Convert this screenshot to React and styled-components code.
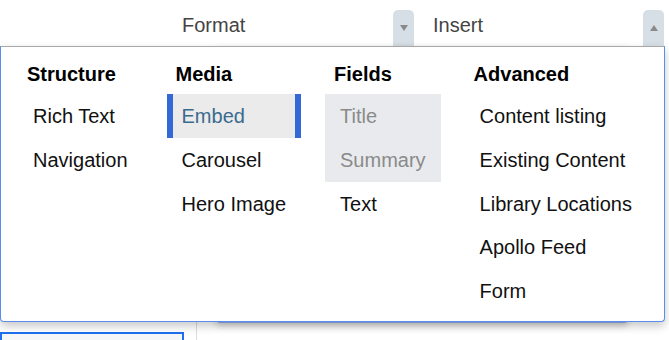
import React from 'react'
import styled, { createGlobalStyle } from 'styled-components'

const Global = createGlobalStyle`
  body {
    margin: 0;
    background: #fff;
    font-family: "Liberation Sans", Arial, sans-serif;
  }
`

const Page = styled.div`
  position: relative;
  width: 669px;
  height: 340px;
  overflow: hidden;
`

const Toolbar = styled.div`
  display: flex;
  gap: 4px;
  height: 46px;
  padding-left: 167px;
`

const Menu = styled.div`
  display: flex;
  align-items: center;
  justify-content: space-between;
  width: ${p => p.$width}px;
`

const MenuLabel = styled.span`
  padding: 4px 0 0 15px;
  font-size: 20px;
  color: #444;
`

const ArrowButton = styled.div`
  display: flex;
  align-items: center;
  justify-content: center;
  align-self: flex-end;
  width: 21px;
  height: 36px;
  background: #d6dfe6;
  border-radius: 5px 5px 0 0;
`

const Workspace = styled.div`
  display: flex;
  height: 294px;
`

const Sidebar = styled.div`
  width: 196px;
  border-right: 1px solid #dcdcdc;
  padding-top: 286px;
`

const SideBox = styled.div`
  width: 184px;
  height: 40px;
  box-sizing: border-box;
  border: 2px solid #1d6ff0;
  background: #f5f6f8;
`

const Card = styled.div`
  margin-left: 19px;
  width: 412px;
  height: 277px;
  box-sizing: border-box;
  border: 1px solid #8eaee8;
  border-bottom-width: 2px;
  border-radius: 4px;
  box-shadow: 0 3px 6px rgba(0, 0, 0, 0.18);
`

const Panel = styled.div`
  position: absolute;
  top: 46px;
  left: 0;
  width: 665px;
  height: 276px;
  box-sizing: border-box;
  display: flex;
  gap: 24px;
  padding: 13px 0 0 17px;
  background: #fff;
  border: 1px solid #5b8def;
  border-top-color: #a9a9a9;
  border-radius: 0 0 4px 4px;
  box-shadow: 0 4px 10px rgba(0, 0, 0, 0.22);
`

const Column = styled.div`
  display: flex;
  flex-direction: column;
`

const Heading = styled.div`
  font-size: 20px;
  font-weight: bold;
  line-height: 28px;
  padding-left: 9px;
  margin-bottom: 6px;
  color: #000;
`

const Item = styled.div`
  box-sizing: border-box;
  height: 43.75px;
  padding: 2px 15px 0;
  line-height: 41.75px;
  font-size: 20px;
  white-space: nowrap;
  color: #111;

  ${p => p.$selected && `
    padding: 2px 9px 0;
    background: #ebebeb;
    border-left: 6px solid #3468d4;
    border-right: 6px solid #3468d4;
    color: #3a6a8e;
  `}

  ${p => p.$disabled && `
    background: #e8eaed;
    color: #8a8a8a;
  `}
`

const Triangle = ({ up }) => (
  <svg width="8" height="6" viewBox="0 0 8 6">
    <path d={up ? 'M0 6 L4 0 L8 6 Z' : 'M0 0 L8 0 L4 6 Z'} fill="#8a8a8a" />
  </svg>
)

const columns = [
  { title: 'Structure', items: [{ label: 'Rich Text' }, { label: 'Navigation' }] },
  {
    title: 'Media',
    items: [{ label: 'Embed', selected: true }, { label: 'Carousel' }, { label: 'Hero Image' }],
  },
  {
    title: 'Fields',
    items: [{ label: 'Title', disabled: true }, { label: 'Summary', disabled: true }, { label: 'Text' }],
  },
  {
    title: 'Advanced',
    items: [
      { label: 'Content listing' },
      { label: 'Existing Content' },
      { label: 'Library Locations' },
      { label: 'Apollo Feed' },
      { label: 'Form' },
    ],
  },
]

export default function App() {
  return (
    <Page>
      <Global />
      <Toolbar>
        <Menu $width={247}>
          <MenuLabel>Format</MenuLabel>
          <ArrowButton>
            <Triangle />
          </ArrowButton>
        </Menu>
        <Menu $width={246}>
          <MenuLabel>Insert</MenuLabel>
          <ArrowButton>
            <Triangle up />
          </ArrowButton>
        </Menu>
      </Toolbar>
      <Workspace>
        <Sidebar>
          <SideBox />
        </Sidebar>
        <Card />
      </Workspace>
      <Panel>
        {columns.map(col => (
          <Column key={col.title}>
            <Heading>{col.title}</Heading>
            {col.items.map(item => (
              <Item key={item.label} $selected={item.selected} $disabled={item.disabled}>
                {item.label}
              </Item>
            ))}
          </Column>
        ))}
      </Panel>
    </Page>
  )
}
